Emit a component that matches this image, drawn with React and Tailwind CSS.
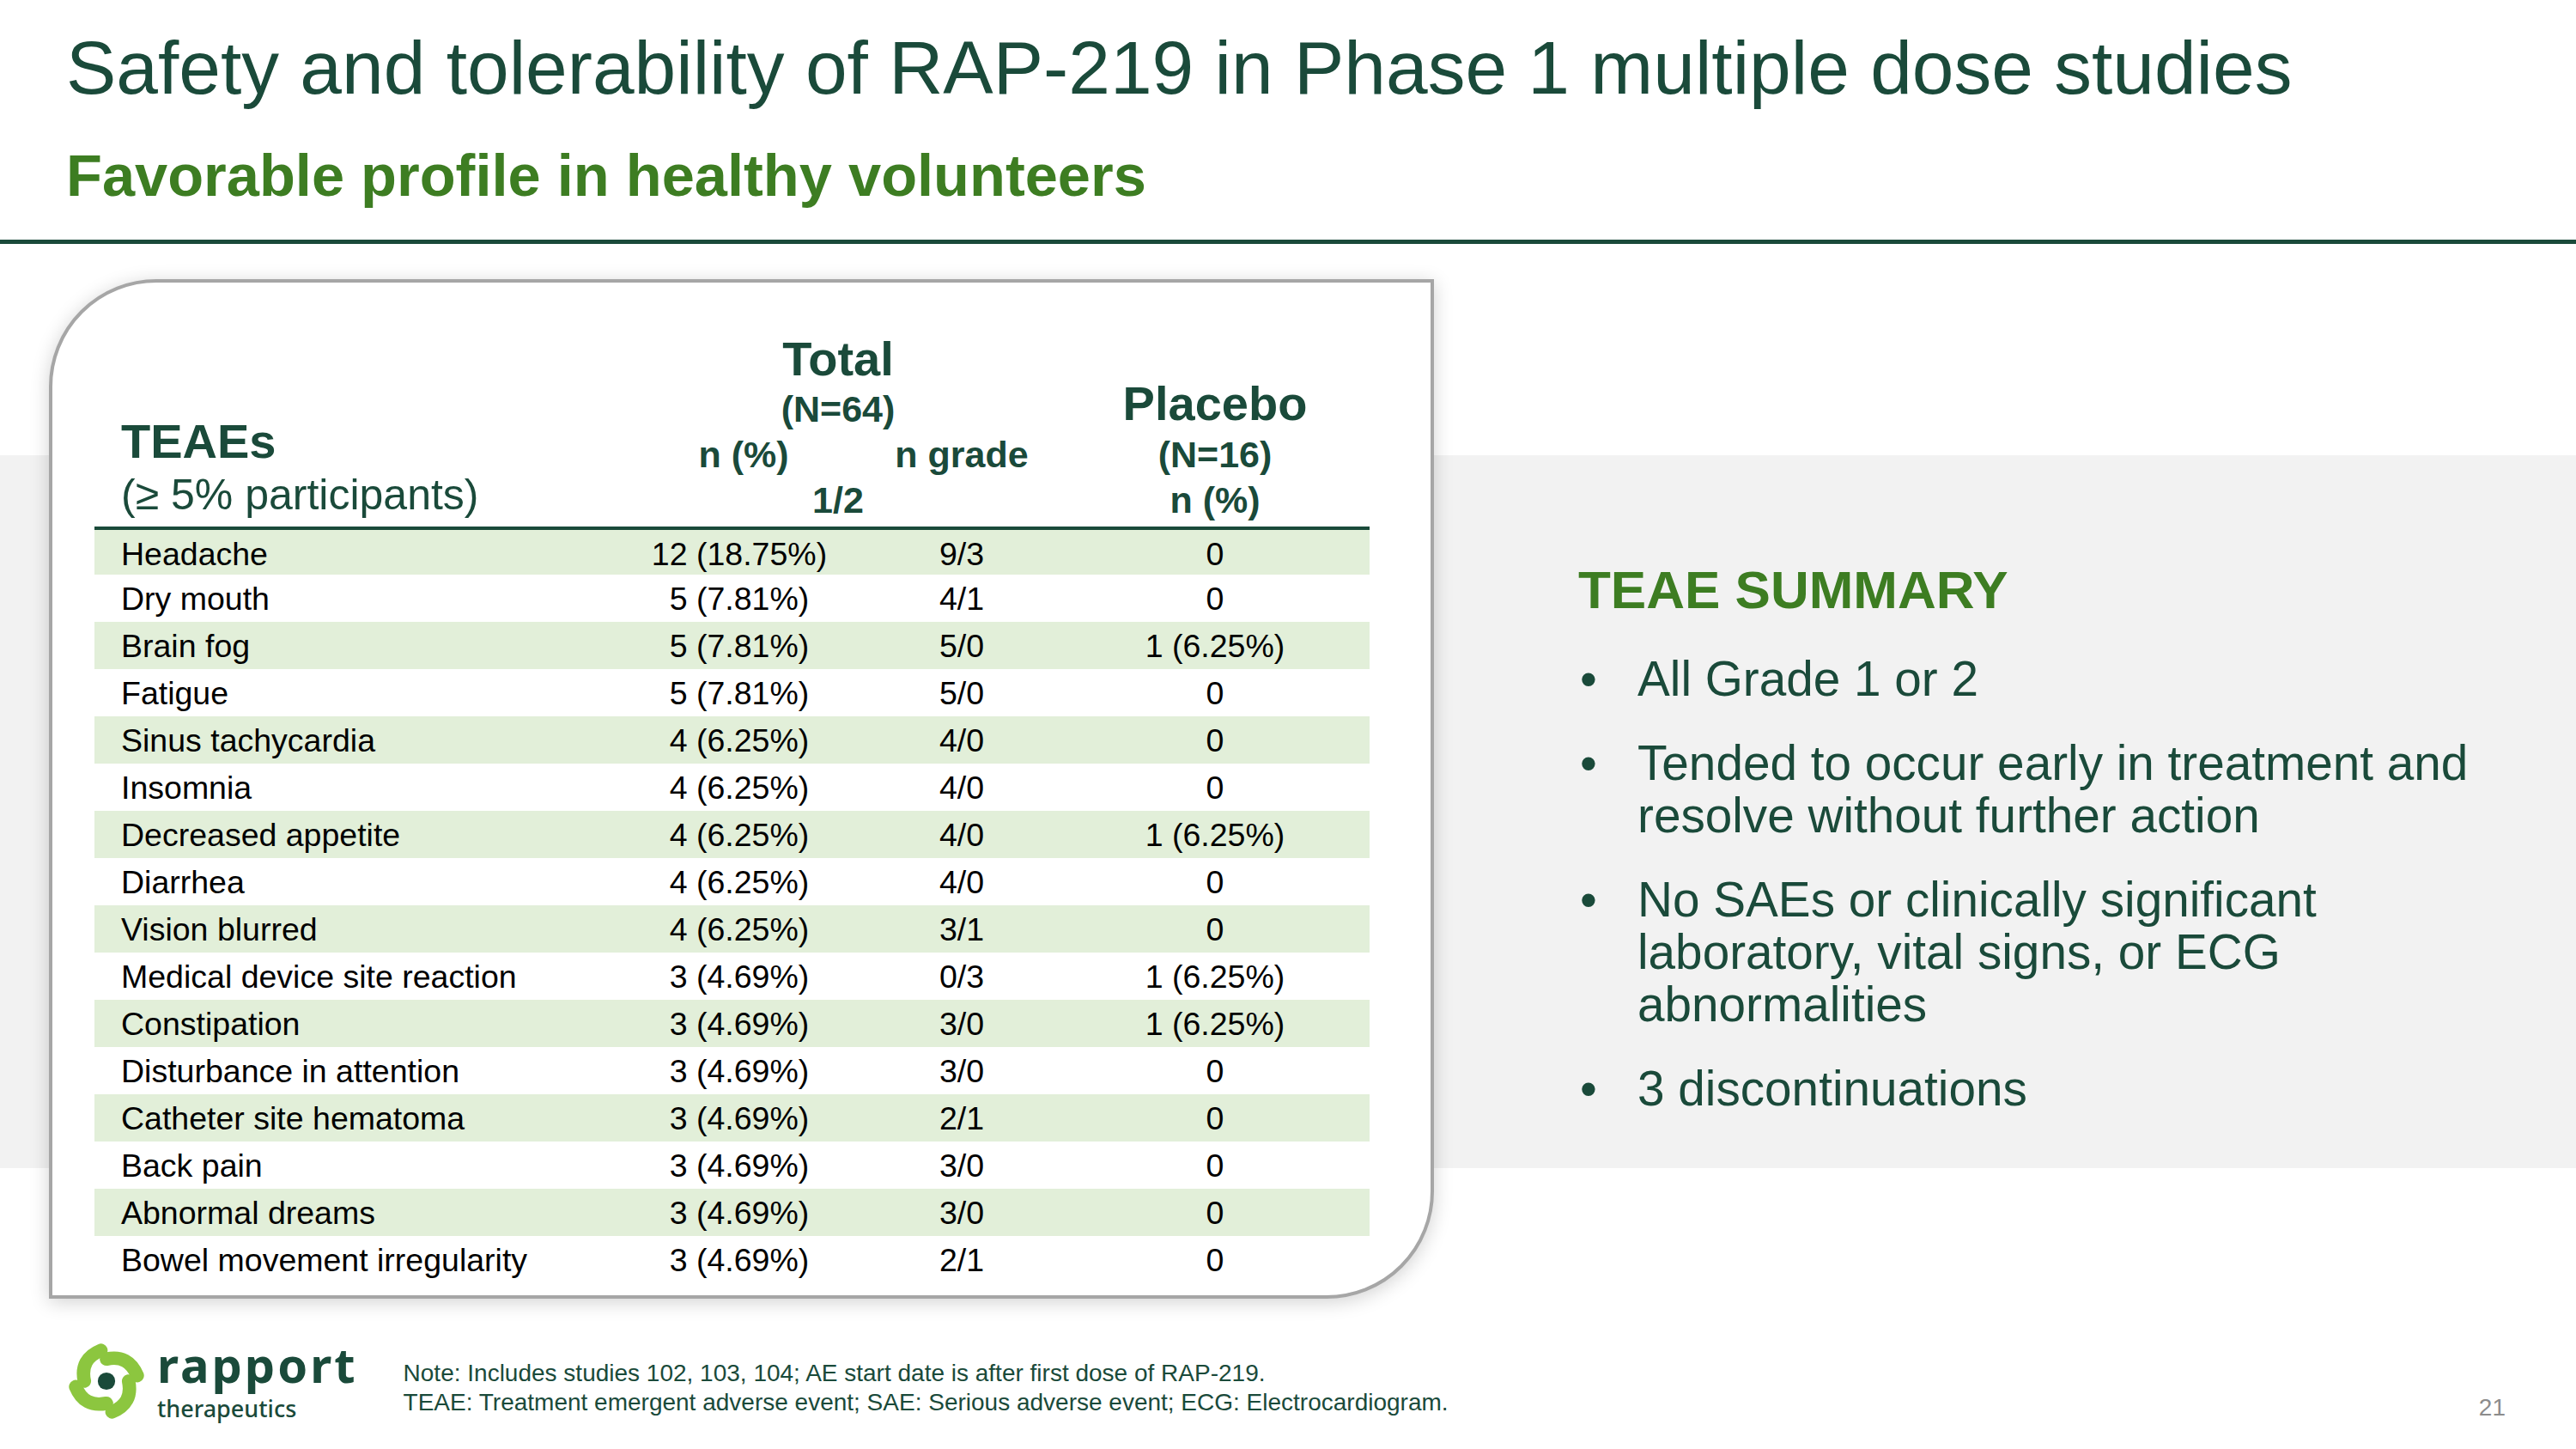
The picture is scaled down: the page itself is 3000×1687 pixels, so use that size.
const DARK = "text-[#1a4a3a]";

const rows = [
  ["Headache", "12 (18.75%)", "9/3", "0"],
  ["Dry mouth", "5 (7.81%)", "4/1", "0"],
  ["Brain fog", "5 (7.81%)", "5/0", "1 (6.25%)"],
  ["Fatigue", "5 (7.81%)", "5/0", "0"],
  ["Sinus tachycardia", "4 (6.25%)", "4/0", "0"],
  ["Insomnia", "4 (6.25%)", "4/0", "0"],
  ["Decreased appetite", "4 (6.25%)", "4/0", "1 (6.25%)"],
  ["Diarrhea", "4 (6.25%)", "4/0", "0"],
  ["Vision blurred", "4 (6.25%)", "3/1", "0"],
  ["Medical device site reaction", "3 (4.69%)", "0/3", "1 (6.25%)"],
  ["Constipation", "3 (4.69%)", "3/0", "1 (6.25%)"],
  ["Disturbance in attention", "3 (4.69%)", "3/0", "0"],
  ["Catheter site hematoma", "3 (4.69%)", "2/1", "0"],
  ["Back pain", "3 (4.69%)", "3/0", "0"],
  ["Abnormal dreams", "3 (4.69%)", "3/0", "0"],
  ["Bowel movement irregularity", "3 (4.69%)", "2/1", "0"],
];

const bullets = [
  ["All Grade 1 or 2"],
  ["Tended to occur early in treatment and", "resolve without further action"],
  ["No SAEs or clinically significant", "laboratory, vital signs, or ECG", "abnormalities"],
  ["3 discontinuations"],
];

// pinwheel mark of the logo
function LogoMark() {
  return (
    <svg width="92" height="92" viewBox="0 0 100 100">
      <g fill="none" stroke="#8cc63f" strokeWidth="17" strokeLinecap="round">
        <path d="M50 22 Q78 16 89 43" />
        <path d="M78 50 Q84 78 57 89" />
        <path d="M50 78 Q22 84 11 57" />
        <path d="M22 50 Q16 22 43 11" />
      </g>
      <circle cx="50" cy="50" r="11" fill="#1a4a3a" />
    </svg>
  );
}

function TableCard() {
  return (
    <div className="shrink-0 w-[1613px] h-[1187px] ml-[57px] mt-[41px] bg-white border-4 border-[#a6a6a6] rounded-tl-[125px] rounded-br-[125px] shadow-[0_4px_22px_rgba(0,0,0,0.18)] pl-[49px] pr-[71px] pt-[57px]">
      {/* header */}
      <div className={`flex items-end border-b-4 border-[#1a4a3a] font-bold ${DARK}`}>
        <div className="w-[607px] pl-[31px] pb-[6px]">
          <div className="text-[56px] leading-[62px]">TEAEs</div>
          <div className="text-[50px] leading-[62px] font-normal">(≥ 5% participants)</div>
        </div>
        <div className="w-[518px] pb-[4px] text-center">
          <div className="text-[56px] leading-[64px]">Total</div>
          <div className="text-[43px] leading-[53px]">(N=64)</div>
          <div className="flex text-[43px] leading-[53px]">
            <div className="w-[288px] pl-[10px]">n (%)</div>
            <div className="w-[230px]">n grade</div>
          </div>
          <div className="text-[43px] leading-[53px]">1/2</div>
        </div>
        <div className="w-[360px] pb-[4px] text-center">
          <div className="text-[56px] leading-[66px]">Placebo</div>
          <div className="text-[43px] leading-[53px]">(N=16)</div>
          <div className="text-[43px] leading-[53px]">n (%)</div>
        </div>
      </div>
      {/* body */}
      <div className="text-[37.5px] text-black">
        {rows.map((r, i) => (
          <div
            key={r[0]}
            className={`grid grid-cols-[607px_288px_230px_360px] items-center ${i === 0 ? "h-[52px] pb-[7px]" : "h-[55px]"} ${i % 2 === 0 ? "bg-[#e2efd9]" : "bg-white"}`}
          >
            <div className="pl-[31px]">{r[0]}</div>
            <div className="text-center">{r[1]}</div>
            <div className="text-center">{r[2]}</div>
            <div className="text-center">{r[3]}</div>
          </div>
        ))}
      </div>
    </div>
  );
}

function Summary() {
  return (
    <div className={`ml-[168px] pt-[372px] w-[1080px] ${DARK}`}>
      <div className="text-[62px] leading-[62px] font-bold text-[#3d7d22]">TEAE SUMMARY</div>
      <div className="mt-[42px] flex flex-col gap-[37px]">
        {bullets.map((b) => (
          <div key={b[0]} className="flex text-[56.7px] leading-[61px]">
            <span className="w-[69px] pl-[2px] shrink-0">•</span>
            <div className="w-[1005px]">
              {b.map((line) => (
                <div key={line}>{line}</div>
              ))}
            </div>
          </div>
        ))}
      </div>
    </div>
  );
}

export default function App() {
  return (
    <div className="w-[3000px] h-[1687px] bg-white overflow-hidden font-['Liberation_Sans',Arial,sans-serif]">
      <div className={`pl-[77px] pt-[36px] ${DARK}`}>
        <h1 className="text-[87.5px] leading-[87px]">Safety and tolerability of RAP-219 in Phase 1 multiple dose studies</h1>
        <h2 className="mt-[48px] text-[68.6px] leading-[68px] font-bold text-[#3d7d22]">Favorable profile in healthy volunteers</h2>
      </div>
      <div className="mt-[40px] h-[5px] bg-[#1a4a3a]" />

      <div className="flex items-start bg-[linear-gradient(to_bottom,#ffffff_246px,#f2f2f2_246px,#f2f2f2_1076px,#ffffff_1076px)]">
        <TableCard />
        <Summary />
      </div>

      <div className={`flex items-start ${DARK}`}>
        <div className="flex items-start ml-[78px] mt-[50px]">
          <LogoMark />
          <div className="ml-[13px] -mt-[2px] font-['Noto_Sans',sans-serif]">
            <div className="text-[56px] leading-[56px] font-bold tracking-[3px]">rapport</div>
            <div className="text-[27px] leading-[30px] font-medium mt-[9px]">therapeutics</div>
          </div>
        </div>
        <div className="ml-[53px] mt-[70px] text-[28px] leading-[34px]">
          <div>Note: Includes studies 102, 103, 104; AE start date is after first dose of RAP-219.</div>
          <div>TEAE: Treatment emergent adverse event; SAE: Serious adverse event; ECG: Electrocardiogram.</div>
        </div>
        <div className="ml-auto mr-[82px] mt-[113px] text-[28px] leading-[28px] text-[#8c8c8c]">21</div>
      </div>
    </div>
  );
}
